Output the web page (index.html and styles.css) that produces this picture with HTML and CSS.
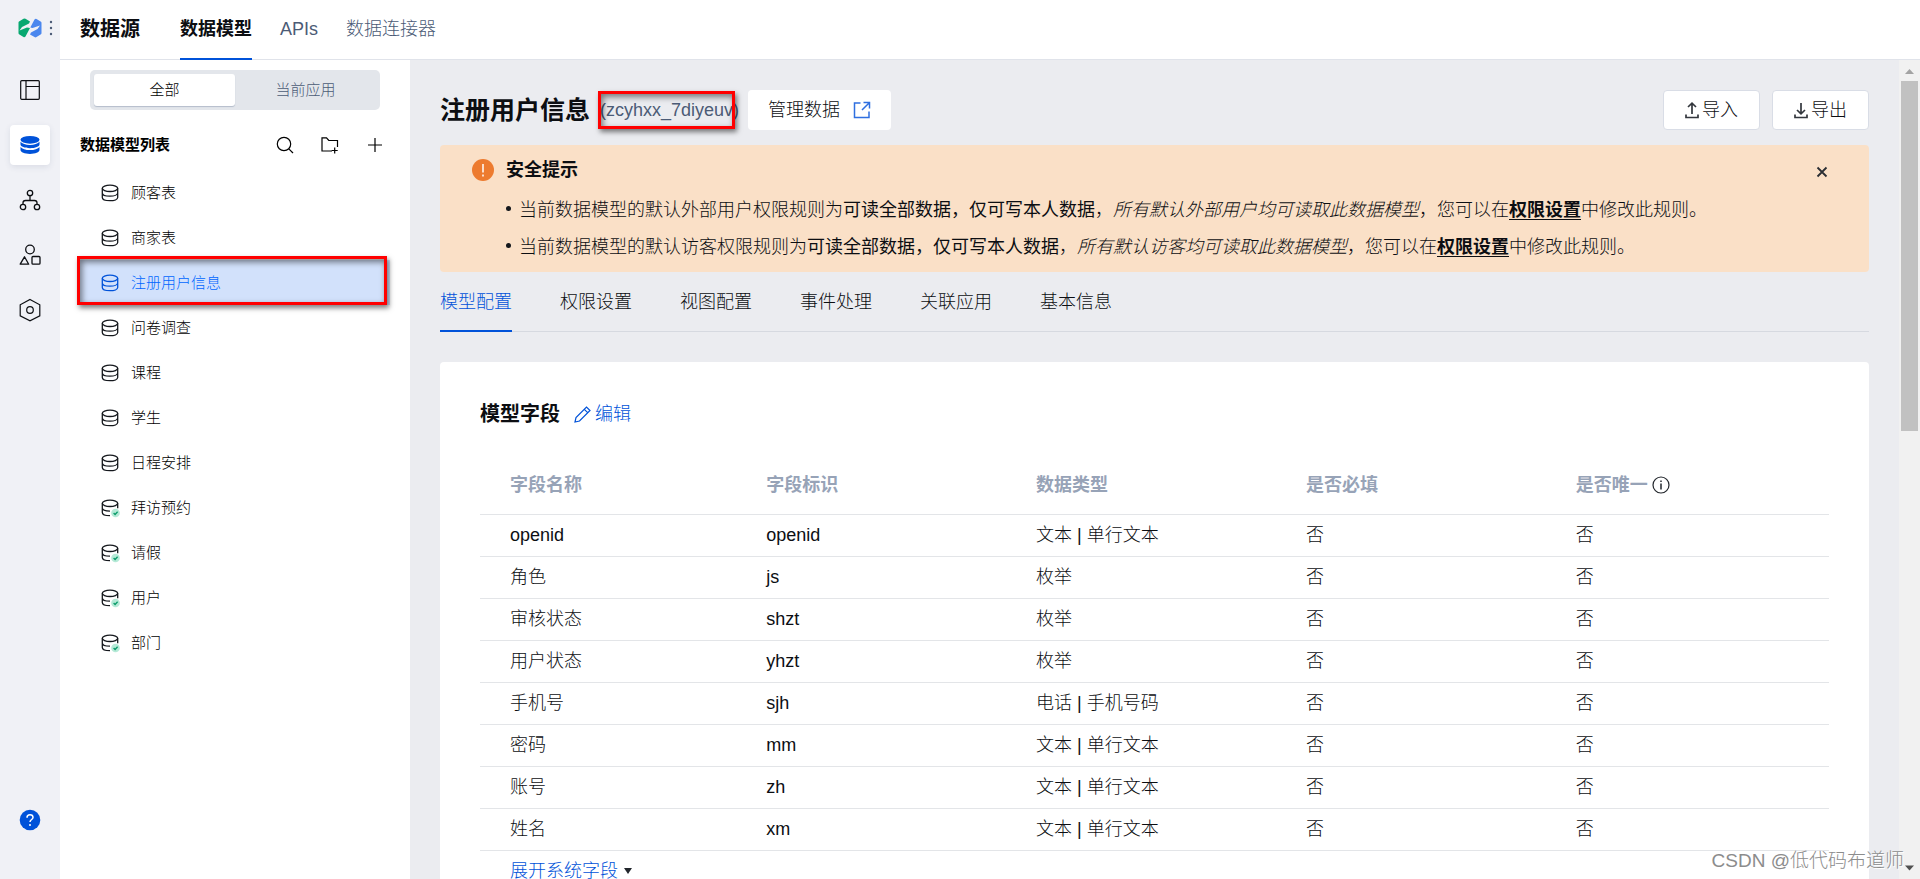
FILE: index.html
```html
<!DOCTYPE html>
<html lang="zh-CN">
<head>
<meta charset="utf-8">
<title>数据源 - 数据模型</title>
<link rel="stylesheet" href="styles.css">
</head>
<body>
<svg class="sprite" aria-hidden="true">
  <symbol id="db" viewBox="0 0 18 18">
    <g fill="none" stroke="currentColor" stroke-width="1.3">
      <ellipse cx="9" cy="4.3" rx="7.7" ry="3.2"/>
      <path d="M1.3 4.3v9.2c0 1.8 3.4 3.2 7.7 3.2s7.7-1.4 7.7-3.2V4.3M1.3 8.9c0 1.8 3.4 3.2 7.7 3.2s7.7-1.4 7.7-3.2"/>
    </g>
  </symbol>
  <symbol id="db-ok" viewBox="0 0 20 20">
    <g fill="none" stroke="currentColor" stroke-width="1.3">
      <ellipse cx="9" cy="4.3" rx="7.7" ry="3.2"/>
      <path d="M16.7 4.3v5M1.3 4.3v9.2c0 1.8 3.4 3.2 7.7 3.2M1.3 8.9c0 1.8 3.4 3.2 7.7 3.2"/>
    </g>
    <circle cx="14.5" cy="14" r="4.3" fill="#b5ead7"/>
    <path d="M12.6 14l1.5 1.5 2.5-2.7" fill="none" stroke="#0a9b6a" stroke-width="1.3"/>
  </symbol>
</svg>
<div class="app">
  <nav class="rail" aria-label="主导航">
    <div class="brand">
      <svg width="24" height="20" viewBox="0 0 24 20"><path fill="#07a870" d="M.5 4.5Q.5 4 1 3.600L5.500.700Q6.500.200 7.500.700L12 3.500 11 5.500 4 9 1.500 12.500 9 9.500 12 10 7.500 18.500Q6.500 19.800 5.500 19L1 16.200Q.500 15.800.500 15z"/><path fill="#4b87ee" d="M12.300 9.500 16.500 1.500Q17.500.200 18.500.900L23 3.800Q23.500 4.200 23.500 5V15Q23.500 15.800 23 16.200L18.500 19Q17.500 19.800 16.500 19L12 16.500 13 14.500 19.500 11 22 7.500 14.500 10z"/></svg>
      <svg width="4" height="18" viewBox="0 0 4 18" fill="#4b5b76"><circle cx="2" cy="3" r="1.2"/><circle cx="2" cy="9" r="1.2"/><circle cx="2" cy="15" r="1.2"/></svg>
    </div>
    <button class="rail-btn" aria-label="应用"><svg width="20" height="20" viewBox="0 0 20 20" fill="none" stroke="currentColor" stroke-width="1.2"><rect x=".7" y=".7" width="18.6" height="18.6" rx="1"/><path d="M6 1v18M6 6.5h13"/></svg></button>
    <button class="rail-btn rail-btn-active" aria-label="数据源"><svg width="20" height="20" viewBox="0 0 20 20" fill="currentColor"><ellipse cx="10" cy="4.8" rx="9.5" ry="3.9"/><path d="M.5 6.8c1.5 2 5.200 3.100 9.500 3.100s8-1.100 9.500-3.100v2.800c0 2-4.200 3.700-9.500 3.700S.5 11.600.5 9.600z"/><path d="M.5 12c1.5 2 5.200 3.100 9.500 3.100s8-1.100 9.500-3.100v3c0 2.200-4.200 3.900-9.500 3.900S.5 17.200.5 15z"/></svg></button>
    <button class="rail-btn" aria-label="流程"><svg width="22" height="22" viewBox="0 0 22 22" fill="none" stroke="currentColor" stroke-width="1.3"><circle cx="11" cy="4" r="2.7"/><circle cx="4" cy="18" r="2.7"/><circle cx="18" cy="18" r="2.7"/><path d="M11 6.700v5M4 15.300v-1.500c0-1.500 1-2.300 2.500-2.300h9c1.500 0 2.500.800 2.500 2.300v1.500"/></svg></button>
    <button class="rail-btn" aria-label="组件"><svg width="22" height="22" viewBox="0 0 22 22" fill="none" stroke="currentColor" stroke-width="1.3"><circle cx="11" cy="5.5" r="4.3"/><path d="M5.5 12.800 1.200 20.200h8.500z" stroke-linejoin="round"/><rect x="13" y="12.5" width="8" height="7.7" rx="1"/></svg></button>
    <button class="rail-btn" aria-label="设置"><svg width="22" height="24" viewBox="0 0 22 24" fill="none" stroke="currentColor" stroke-width="1.2"><path d="M11 1.500 20.800 6.800v11L11 22.800 1.200 17.800v-11z"/><circle cx="11" cy="12" r="3.3"/></svg></button>
    <button class="rail-btn rail-help" aria-label="帮助"><svg width="22" height="22" viewBox="0 0 22 22"><circle cx="11" cy="11" r="10.3" fill="#0052d9"/><path d="M8 8.800C8 6.800 9.300 5.800 11 5.800s3 1 3 2.600c0 2-3 2.300-3 4.600" fill="none" stroke="#fff" stroke-width="1.5"/><circle cx="11" cy="16" r="1" fill="#fff"/></svg></button>
  </nav>

  <div class="workspace">
    <header class="topbar">
      <h1 class="topbar-title">数据源</h1>
      <nav class="topnav">
        <a class="topnav-link topnav-active" href="#">数据模型</a>
        <a class="topnav-link" href="#">APIs</a>
        <a class="topnav-link" href="#">数据连接器</a>
      </nav>
    </header>

    <div class="columns">
      <aside class="sidebar">
        <div class="segment">
          <button class="segment-btn segment-active">全部</button>
          <button class="segment-btn">当前应用</button>
        </div>
        <div class="list-head">
          <h2 class="list-title">数据模型列表</h2>
          <button class="icon-btn" aria-label="搜索"><svg width="18" height="18" viewBox="0 0 18 18" fill="none" stroke="currentColor" stroke-width="1.2"><circle cx="8" cy="8" r="6.7"/><path d="M12.800 12.800 17 17"/></svg></button>
          <button class="icon-btn" aria-label="新建文件夹"><svg width="18" height="18" viewBox="0 0 18 18" fill="none" stroke="currentColor" stroke-width="1.2"><path d="M11 15H1V1.800h4.500l2.300 2.700H16.500V11M13.700 11.500v6M10.700 14.500h6"/></svg></button>
          <button class="icon-btn" aria-label="新建"><svg width="18" height="18" viewBox="0 0 18 18" fill="none" stroke="currentColor" stroke-width="1.2"><path d="M9 2v14M2 9h14"/></svg></button>
        </div>
        <ul class="models">
          <li><a class="model" href="#"><svg class="model-icon"><use href="#db"/></svg>顾客表</a></li>
          <li><a class="model" href="#"><svg class="model-icon"><use href="#db"/></svg>商家表</a></li>
          <li><a class="model model-active" href="#"><svg class="model-icon"><use href="#db"/></svg>注册用户信息<span class="mark mark-model"></span></a></li>
          <li><a class="model" href="#"><svg class="model-icon"><use href="#db"/></svg>问卷调查</a></li>
          <li><a class="model" href="#"><svg class="model-icon"><use href="#db"/></svg>课程</a></li>
          <li><a class="model" href="#"><svg class="model-icon"><use href="#db"/></svg>学生</a></li>
          <li><a class="model" href="#"><svg class="model-icon"><use href="#db"/></svg>日程安排</a></li>
          <li><a class="model" href="#"><svg class="model-icon model-icon-ok"><use href="#db-ok"/></svg>拜访预约</a></li>
          <li><a class="model" href="#"><svg class="model-icon model-icon-ok"><use href="#db-ok"/></svg>请假</a></li>
          <li><a class="model" href="#"><svg class="model-icon model-icon-ok"><use href="#db-ok"/></svg>用户</a></li>
          <li><a class="model" href="#"><svg class="model-icon model-icon-ok"><use href="#db-ok"/></svg>部门</a></li>
        </ul>
      </aside>

      <main class="main">
        <div class="page-head">
          <h2 class="page-title">注册用户信息</h2>
          <span class="page-id">(zcyhxx_7diyeuv)<span class="mark mark-id"></span></span>
          <button class="btn btn-manage">管理数据
            <svg width="18" height="18" viewBox="0 0 18 18" fill="none" stroke="#2f6fe0" stroke-width="1.5"><path d="M7.500 2H1.500v14.500H16V10.500M10.500 1.500H16.500V7.500M16.300 1.700 9 9"/></svg>
          </button>
          <div class="page-actions">
            <button class="btn btn-line"><svg width="14" height="17" viewBox="0 0 14 17" fill="none" stroke="#33373d" stroke-width="1.7"><path d="M7 12V1.500M3 5l4-3.800L11 5M1 12.500v3h12v-3"/></svg>导入</button>
            <button class="btn btn-line"><svg width="14" height="17" viewBox="0 0 14 17" fill="none" stroke="#33373d" stroke-width="1.7"><path d="M7 1v10.500M3 8l4 3.800L11 8M1 12.500v3h12v-3"/></svg>导出</button>
          </div>
        </div>

        <section class="alert">
          <svg class="alert-icon" width="22" height="22" viewBox="0 0 22 22"><circle cx="11" cy="11" r="11" fill="#ed7b2f"/><path d="M11 5v8.500M11 15.500v2" stroke="#fff" stroke-width="1.5"/></svg>
          <div class="alert-body">
            <h3 class="alert-title">安全提示</h3>
            <ul class="alert-list">
              <li>当前数据模型的默认外部用户权限规则为<b>可读全部数据，仅可写本人数据</b>，<i>所有默认外部用户均可读取此数据模型</i>，您可以在<a class="alert-link" href="#">权限设置</a>中修改此规则。</li>
              <li>当前数据模型的默认访客权限规则为<b>可读全部数据，仅可写本人数据</b>，<i>所有默认访客均可读取此数据模型</i>，您可以在<a class="alert-link" href="#">权限设置</a>中修改此规则。</li>
            </ul>
          </div>
          <button class="alert-close" aria-label="关闭"><svg width="12" height="12" viewBox="0 0 12 12" stroke="#2b2e33" stroke-width="1.8"><path d="M1.500 1.500l9 9M10.500 1.500l-9 9"/></svg></button>
        </section>

        <nav class="tabs">
          <a class="tab tab-active" href="#">模型配置</a>
          <a class="tab" href="#">权限设置</a>
          <a class="tab" href="#">视图配置</a>
          <a class="tab" href="#">事件处理</a>
          <a class="tab" href="#">关联应用</a>
          <a class="tab" href="#">基本信息</a>
        </nav>

        <section class="card">
          <div class="card-head">
            <h3 class="card-title">模型字段</h3>
            <button class="edit"><svg width="17" height="17" viewBox="0 0 17 17" fill="none" stroke="currentColor" stroke-width="1.2"><path d="M1 16l1-4.500L12.500 1 16 4.500 5.500 15zM10.300 3.300l3.400 3.400"/></svg>编辑</button>
          </div>
          <table class="fields">
            <colgroup><col class="col-name"><col class="col-mid"><col class="col-mid"><col class="col-mid"><col></colgroup>
            <thead>
              <tr><th>字段名称</th><th>字段标识</th><th>数据类型</th><th>是否必填</th><th><span class="th-info">是否唯一<svg width="18" height="18" viewBox="0 0 18 18" fill="none" stroke="#22262c" stroke-width="1.2"><circle cx="9" cy="9" r="8"/><path d="M9 7.500V13.500M9 4.500v1.500" stroke-width="1.5"/></svg></span></th></tr>
            </thead>
            <tbody>
              <tr><td>openid</td><td>openid</td><td>文本 | 单行文本</td><td>否</td><td>否</td></tr>
              <tr><td>角色</td><td>js</td><td>枚举</td><td>否</td><td>否</td></tr>
              <tr><td>审核状态</td><td>shzt</td><td>枚举</td><td>否</td><td>否</td></tr>
              <tr><td>用户状态</td><td>yhzt</td><td>枚举</td><td>否</td><td>否</td></tr>
              <tr><td>手机号</td><td>sjh</td><td>电话 | 手机号码</td><td>否</td><td>否</td></tr>
              <tr><td>密码</td><td>mm</td><td>文本 | 单行文本</td><td>否</td><td>否</td></tr>
              <tr><td>账号</td><td>zh</td><td>文本 | 单行文本</td><td>否</td><td>否</td></tr>
              <tr><td>姓名</td><td>xm</td><td>文本 | 单行文本</td><td>否</td><td>否</td></tr>
            </tbody>
          </table>
          <button class="expand">展开系统字段<svg width="8" height="6" viewBox="0 0 8 6"><path d="M0 0h8L4 6z" fill="#22262c"/></svg></button>
        </section>
      </main>

      <div class="scrollbar" aria-hidden="true">
        <svg class="scroll-arrow" viewBox="0 0 21 21"><path d="M6 14 10.500 9 15 14z" fill="#a3a3a3"/></svg>
        <div class="scroll-track"><div class="scroll-thumb"></div></div>
        <svg class="scroll-arrow" viewBox="0 0 21 21"><path d="M6 7.500h9L10.500 12.500z" fill="#505050"/></svg>
      </div>
    </div>
  </div>
  <div class="watermark">CSDN @低代码布道师</div>
</div>
</body>
</html>
```

FILE: styles.css
```css
* { box-sizing: border-box; }

body {
  margin: 0;
  font: 300 18px/24px "Liberation Sans", "Noto Sans CJK SC", sans-serif;
  color: #0c0e12;
}

h1, h2, h3, ul { margin: 0; padding: 0; }
ul { list-style: none; }
a { color: inherit; text-decoration: none; }
svg { display: block; flex: none; }

button {
  font: inherit;
  color: inherit;
  border: 0;
  padding: 0;
  background: none;
  display: flex;
  align-items: center;
  justify-content: center;
  cursor: pointer;
}

.sprite { position: absolute; width: 0; height: 0; }

.app {
  position: relative;
  display: flex;
  height: 100vh;
  overflow: hidden;
}

/* Icon rail */
.rail {
  flex: 0 0 60px;
  display: flex;
  flex-direction: column;
  align-items: center;
  gap: 15px;
  padding-bottom: 39px;
  background: #f0f1f6;
}
.brand {
  display: flex;
  align-items: center;
  justify-content: flex-end;
  gap: 7px;
  width: 100%;
  height: 55px;
  padding-right: 7px;
}
.rail-btn { width: 40px; height: 40px; border-radius: 4px; }
.rail-btn-active {
  color: #0052d9;
  background: #fff;
  box-shadow: 0 2px 6px rgba(30, 50, 90, .1);
}
.rail-help { margin-top: auto; }

.workspace {
  flex: 1;
  min-width: 0;
  display: flex;
  flex-direction: column;
}

/* Top bar */
.topbar {
  flex: none;
  display: flex;
  align-items: stretch;
  gap: 40px;
  height: 60px;
  padding-left: 20px;
  border-bottom: 1px solid #e0e3ea;
}
.topbar-title { font-size: 20px; line-height: 58px; }
.topnav { display: flex; gap: 28px; }
.topnav-link { height: 60px; line-height: 58px; color: #4b5b76; }
.topnav-active {
  z-index: 1;
  font-weight: 700;
  color: #0c0e12;
  border-bottom: 2px solid #0052d9;
}

.columns { flex: 1; min-height: 0; display: flex; }

/* Sidebar */
.sidebar {
  flex: 0 0 350px;
  padding: 10px 20px;
  font-size: 15px;
  color: #000;
}
.segment {
  display: flex;
  height: 40px;
  margin: 0 10px;
  padding: 4px;
  border-radius: 5px;
  background: #e3e6eb;
}
.segment-btn { flex: 1; color: #4b5b76; }
.segment-active {
  color: #000;
  border-radius: 3px;
  background: #fff;
  box-shadow: 0 1px 1px #b4bccb;
}
.list-head {
  display: flex;
  align-items: center;
  gap: 27px;
  height: 70px;
  padding-right: 6px;
}
.list-title { flex: 1; font-size: 15px; }
.models { margin-top: -10px; }
.model {
  position: relative;
  display: flex;
  align-items: center;
  gap: 12px;
  height: 45px;
  padding-left: 21px;
}
.model-icon { width: 18px; height: 18px; color: #14171c; }
.model-icon-ok { width: 20px; height: 20px; margin: 2px -2px 0 0; }
.model-active { color: #0066ff; background: #d2e1fb; }
.model-active .model-icon { color: #0052d9; }

/* Red call-out frames */
.mark {
  position: absolute;
  border: 3px solid #f00;
  box-shadow: 2px 3px 5px rgba(0, 0, 0, .5), inset 2px 3px 6px rgba(0, 0, 0, .5);
  pointer-events: none;
}
.mark-model { inset: -4px 3px 0 -3px; }
.mark-id { inset: -7px 4px -7px -2px; }

/* Main area */
.main {
  flex: 1;
  min-width: 0;
  padding: 30px 30px 0;
  overflow: hidden;
  background: #ebecf0;
}
.page-head { display: flex; align-items: center; height: 40px; }
.page-title { font-size: 25px; line-height: 40px; }
.page-id { position: relative; margin: 0 9px 0 10px; color: #4b5b76; }
.btn { height: 40px; border-radius: 4px; background: #fff; }
.btn-manage { gap: 13px; padding: 0 20px; }
.page-actions { display: flex; gap: 12px; margin-left: auto; }
.btn-line { gap: 3px; width: 97px; border: 1px solid #d9dde6; }

.alert {
  display: flex;
  align-items: flex-start;
  margin-top: 15px;
  padding: 13px 40px 6px 32px;
  border-radius: 4px;
  background: #fae0c7;
}
.alert-icon { margin: 1px 12px 0 0; }
.alert-body { flex: 1; }
.alert-title { font-size: 18px; line-height: 24px; }
.alert-list { margin-top: 10px; }
.alert-list li { position: relative; padding-left: 13px; line-height: 37px; }
.alert-list li::before {
  content: "";
  position: absolute;
  left: 0;
  top: 14px;
  width: 5px;
  height: 5px;
  border-radius: 50%;
  background: #14171c;
}
.alert-link { font-weight: 700; text-decoration: underline; text-underline-offset: 3px; }
.alert-close { width: 14px; height: 28px; }

.tabs {
  display: flex;
  gap: 48px;
  height: 60px;
  border-bottom: 1px solid #d6d9e0;
}
.tab { height: 60px; line-height: 60px; }
.tab-active { color: #0052d9; border-bottom: 2px solid #0052d9; }

.card {
  margin-top: 30px;
  padding: 40px;
  border-radius: 4px;
  background: #fff;
}
.card-head { display: flex; align-items: center; gap: 14px; height: 24px; }
.card-title { font-size: 20px; }
.edit { gap: 4px; color: #0052d9; }

.fields {
  width: 100%;
  margin-top: 30px;
  table-layout: fixed;
  border-collapse: collapse;
}
.col-name { width: 19%; }
.col-mid { width: 20%; }
.fields th, .fields td {
  height: 42px;
  padding: 0 0 0 30px;
  text-align: left;
  border-bottom: 1px solid #e3e5e8;
}
.fields th { height: 58px; color: #97a3b7; }
.th-info { display: flex; align-items: center; gap: 4px; }
.expand { gap: 6px; height: 40px; padding-left: 30px; color: #0052d9; }

/* Scroll bar */
.scrollbar {
  flex: 0 0 21px;
  display: flex;
  flex-direction: column;
  background: #f1f1f1;
}
.scroll-arrow { width: 21px; height: 21px; }
.scroll-track { flex: 1; padding: 0 2px; }
.scroll-thumb { height: 45%; background: #c1c1c1; }

.watermark {
  position: absolute;
  right: 16px;
  bottom: 6px;
  font-size: 19px;
  color: #8c8c8c;
  text-shadow: 1px 1px 0 #fff;
}
```
